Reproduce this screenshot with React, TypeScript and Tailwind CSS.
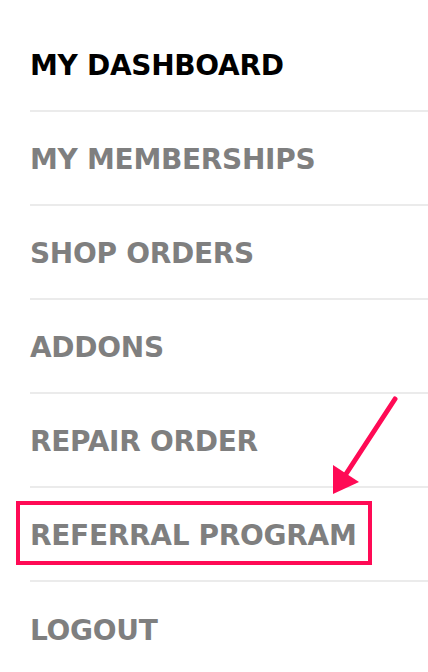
import React from 'react';

const items = [
  { label: 'MY DASHBOARD', active: true },
  { label: 'MY MEMBERSHIPS' },
  { label: 'SHOP ORDERS' },
  { label: 'ADDONS' },
  { label: 'REPAIR ORDER' },
  { label: 'REFERRAL PROGRAM', highlight: true },
  { label: 'LOGOUT', last: true },
];

export default function App() {
  return (
    <div className="relative w-[428px] h-[672px] bg-white overflow-hidden" style={{ fontFamily: '"DejaVu Sans", "Liberation Sans", sans-serif' }}>
      <ul className="ml-[30px] pt-[18px]">
        {items.map(it => (
          <li key={it.label}
            className={`relative h-[94px] flex items-center ${it.last ? '' : 'border-b-2 border-[#ebebeb]'}`}>
            <span className={`mt-[4px] text-[28px] font-bold tracking-[-0.3px] leading-none ${it.active ? 'text-black' : 'text-[#7f7f7f]'}`}>
              {it.label}
            </span>
            {it.highlight && (
              <div className="absolute left-[-14px] top-[13px] w-[356px] h-[64px] border-4 border-[#ff0a55]" />
            )}
          </li>
        ))}
      </ul>

      {/* annotation arrow */}
      <svg className="absolute left-0 top-0" width="428" height="672" viewBox="0 0 428 672">
        <line x1="395" y1="399" x2="346" y2="474" stroke="#ff0a55" strokeWidth="5" strokeLinecap="round" />
        <polygon points="333,494 333,465 359,482" fill="#ff0a55" />
      </svg>
    </div>
  );
}
